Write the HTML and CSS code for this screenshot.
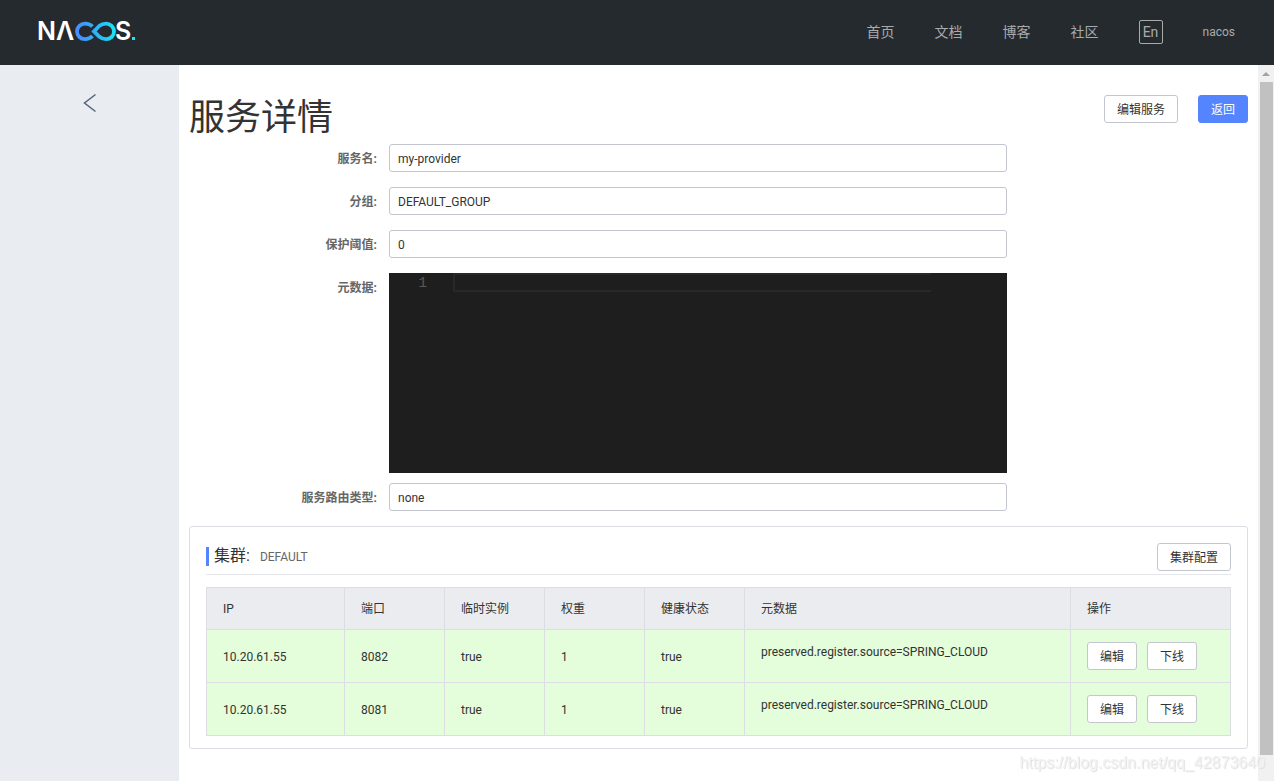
FILE: index.html
```html
<!DOCTYPE html>
<html lang="zh-CN">
<head>
<meta charset="utf-8">
<title>Nacos</title>
<link rel="stylesheet" href="styles.css">
</head>
<body>
<header class="topbar">
  <a class="logo" href="#" aria-label="NACOS.">
    <svg width="104" height="40" viewBox="0 0 104 40">
      <defs>
        <linearGradient id="loop" gradientUnits="userSpaceOnUse" x1="37" y1="0" x2="76" y2="0">
          <stop offset="0" stop-color="#4a8cff"/>
          <stop offset="0.5" stop-color="#2fb0f8"/>
          <stop offset="1" stop-color="#1be3f2"/>
        </linearGradient>
      </defs>
      <g class="logo-text">
        <text x="-1" y="28">N</text>
        <text x="18" y="28">Λ</text>
        <text x="77" y="28">S</text>
      </g>
      <g fill="none" stroke="url(#loop)" stroke-width="3.8" transform="translate(1 7)">
        <path d="M53.400 7.500C51.600 5.500 49.200 4.600 46 4.600C41.600 4.600 38 8 38 12.500C38 17 41.600 20.100 46 20.100C49.200 20.100 51.600 19 53.400 17"/>
        <path d="M55 12.400L60.400 6.800C62.400 5.200 64.600 4.600 67 4.600C71.400 4.600 75 8 75 12.500C75 17 71.400 20.100 67 20.100C64.600 20.100 62.400 19.400 60.400 17.800Z"/>
      </g>
      <rect x="94" y="25" width="3" height="3" fill="#1be3f2"/>
    </svg>
  </a>
  <nav class="nav">
    <a href="#">首页</a>
    <a href="#">文档</a>
    <a href="#">博客</a>
    <a href="#">社区</a>
    <button class="lang" type="button">En</button>
    <a class="user" href="#">nacos</a>
  </nav>
</header>
<div class="shell">
  <aside class="sidebar">
    <button class="back" type="button" aria-label="返回上一页">
      <svg width="14" height="20" viewBox="0 0 14 20"><path d="M12.500 1.500L1.500 10L12.500 18.500" fill="none" stroke="#546478" stroke-width="1.500"/></svg>
    </button>
  </aside>
  <main class="content">
    <div class="title-row">
      <h1>服务详情</h1>
      <div class="actions">
        <button class="btn" type="button">编辑服务</button>
        <button class="btn primary" type="button">返回</button>
      </div>
    </div>
    <form class="form">
      <div class="field"><label for="name">服务名:</label><input id="name" type="text" value="my-provider" readonly></div>
      <div class="field"><label for="group">分组:</label><input id="group" type="text" value="DEFAULT_GROUP" readonly></div>
      <div class="field"><label for="threshold">保护阈值:</label><input id="threshold" type="text" value="0" readonly></div>
      <div class="field field-editor"><label for="metadata">元数据:</label>
        <div class="editor"><span class="line-number">1</span><textarea id="metadata" rows="1" readonly></textarea></div>
      </div>
      <div class="field"><label for="selector">服务路由类型:</label><input id="selector" type="text" value="none" readonly></div>
    </form>
    <section class="card">
      <div class="card-head">
        <h2>集群:<span>DEFAULT</span></h2>
        <button class="btn" type="button">集群配置</button>
      </div>
      <table class="table">
        <colgroup><col class="c-ip"><col class="c-std"><col class="c-std"><col class="c-std"><col class="c-std"><col><col class="c-act"></colgroup>
        <thead>
          <tr><th>IP</th><th>端口</th><th>临时实例</th><th>权重</th><th>健康状态</th><th>元数据</th><th>操作</th></tr>
        </thead>
        <tbody>
          <tr><td>10.20.61.55</td><td>8082</td><td>true</td><td>1</td><td>true</td><td><p>preserved.register.source=SPRING_CLOUD</p></td>
            <td class="ops-cell"><div class="ops"><button class="btn" type="button">编辑</button><button class="btn" type="button">下线</button></div></td></tr>
          <tr><td>10.20.61.55</td><td>8081</td><td>true</td><td>1</td><td>true</td><td><p>preserved.register.source=SPRING_CLOUD</p></td>
            <td class="ops-cell"><div class="ops"><button class="btn" type="button">编辑</button><button class="btn" type="button">下线</button></div></td></tr>
        </tbody>
      </table>
    </section>
  </main>
  <div class="scrollbar" aria-hidden="true"><div class="arrow"></div><div class="thumb"></div></div>
</div>
<div class="watermark">https://blog.csdn.net/qq_42873640</div>
</body>
</html>
```

FILE: styles.css
```css
* { box-sizing: border-box; }

body {
  margin: 0;
  min-height: 100vh;
  display: flex;
  flex-direction: column;
  background: #fff;
  color: #333;
  font: 12px/18px Roboto, "Noto Sans CJK SC", sans-serif;
}

button, input, textarea { font: inherit; color: inherit; }
a { color: inherit; text-decoration: none; }

.topbar {
  height: 65px;
  padding: 0 39px 1px 38px;
  display: flex;
  align-items: center;
  justify-content: space-between;
  background: #252a2f;
}
.logo { display: flex; }
.logo-text { font: 600 25px Inter, sans-serif; fill: #fff; }

.nav {
  display: flex;
  align-items: center;
  gap: 40px;
  color: #a8aaac;
  font-size: 14px;
}
.nav .user { font-size: 12px; }
.lang {
  width: 24px;
  height: 24px;
  padding: 0;
  border: 1px solid #a8aaac;
  border-radius: 2px;
  background: none;
  line-height: 20px;
}

.shell { flex: 1; display: flex; }
.sidebar {
  width: 179px;
  padding-top: 28px;
  background: #e9edf2;
  text-align: center;
}
.back { padding: 0; border: 0; background: none; }
.back svg { display: block; }

.content { flex: 1; min-width: 0; padding: 30px 10px; }
.title-row { display: flex; justify-content: space-between; height: 49px; }
h1 { margin: 0; font-size: 36px; line-height: 46px; font-weight: 400; }
.actions { display: flex; gap: 20px; }

.btn {
  height: 28px;
  padding: 2px 12px 0;
  border: 1px solid #c4c6cf;
  border-radius: 3px;
  background: #fff;
  line-height: 24px;
  white-space: nowrap;
}
.actions .btn, .card-head .btn { flex: none; }
.btn.primary { border-color: #5584ff; background: #5584ff; color: #fff; }

.field {
  display: grid;
  grid-template-columns: 200px 18fr 7fr;
  margin-bottom: 15px;
}
.field label {
  padding-right: 12px;
  line-height: 30px;
  max-height: 28px;
  text-align: right;
  font-weight: bold;
  color: #666;
}
.field input {
  width: 100%;
  height: 28px;
  padding: 2px 8px 0;
  border: 1px solid #c4c6cf;
  border-radius: 3px;
  background: #fff;
  outline: 0;
}
.field-editor { margin-bottom: 10px; }
.editor {
  height: 200px;
  padding-right: 76px;
  display: flex;
  align-items: flex-start;
  background: #1e1e1e;
}
.line-number {
  width: 64px;
  padding-right: 26px;
  text-align: right;
  color: #5a5a5a;
  font: 14px/20px "Liberation Mono", monospace;
}
.editor textarea {
  flex: 1;
  height: 19px;
  padding: 0;
  border: 2px solid #282828;
  border-right: 0;
  background: none;
  outline: 0;
  resize: none;
  overflow: hidden;
  color: #d4d4d4;
}

.card { padding: 16px 16px 12px; border: 1px solid #dcdee3; border-radius: 3px; }
.card-head {
  display: flex;
  justify-content: space-between;
  align-items: flex-start;
  height: 32px;
  margin-bottom: 12px;
  border-bottom: 1px solid #e6e7eb;
}
h2 {
  margin: 4px 0 0;
  padding-left: 5px;
  border-left: 3px solid #5584ff;
  font-size: 16px;
  line-height: 17px;
  font-weight: 400;
}
h2 span { margin-left: 10px; font-size: 12px; color: #666; }

.table { width: 100%; table-layout: fixed; border-collapse: collapse; }
.c-ip { width: 138px; }
.c-std { width: 100px; }
.c-act { width: 160px; }
th, td { padding: 8px 16px; border: 1px solid #dcdee3; text-align: left; font-weight: 400; }
th { background: #ebecf0; height: 42px; }
td { padding-top: 10px; background: #e4fdda; height: 53px; }
td p { margin: 0 0 10px; }
td.ops-cell { padding-top: 8px; }
.ops { display: flex; gap: 10px; }

.scrollbar { width: 16px; background: #f1f1f1; }
.arrow {
  width: 8px;
  height: 4px;
  margin: 7px auto 6px;
  background: #a3a3a3;
  clip-path: polygon(50% 0, 100% 100%, 0 100%);
}
.thumb { width: 13px; height: calc(100% - 43px); margin-left: 2px; background: #c1c1c1; }

.watermark {
  position: fixed;
  right: 9px;
  bottom: 9px;
  color: #f2f2f2;
  text-shadow: 1px 1px 1px #dedede;
  font: 16px/18px "Liberation Sans", sans-serif;
}
```
